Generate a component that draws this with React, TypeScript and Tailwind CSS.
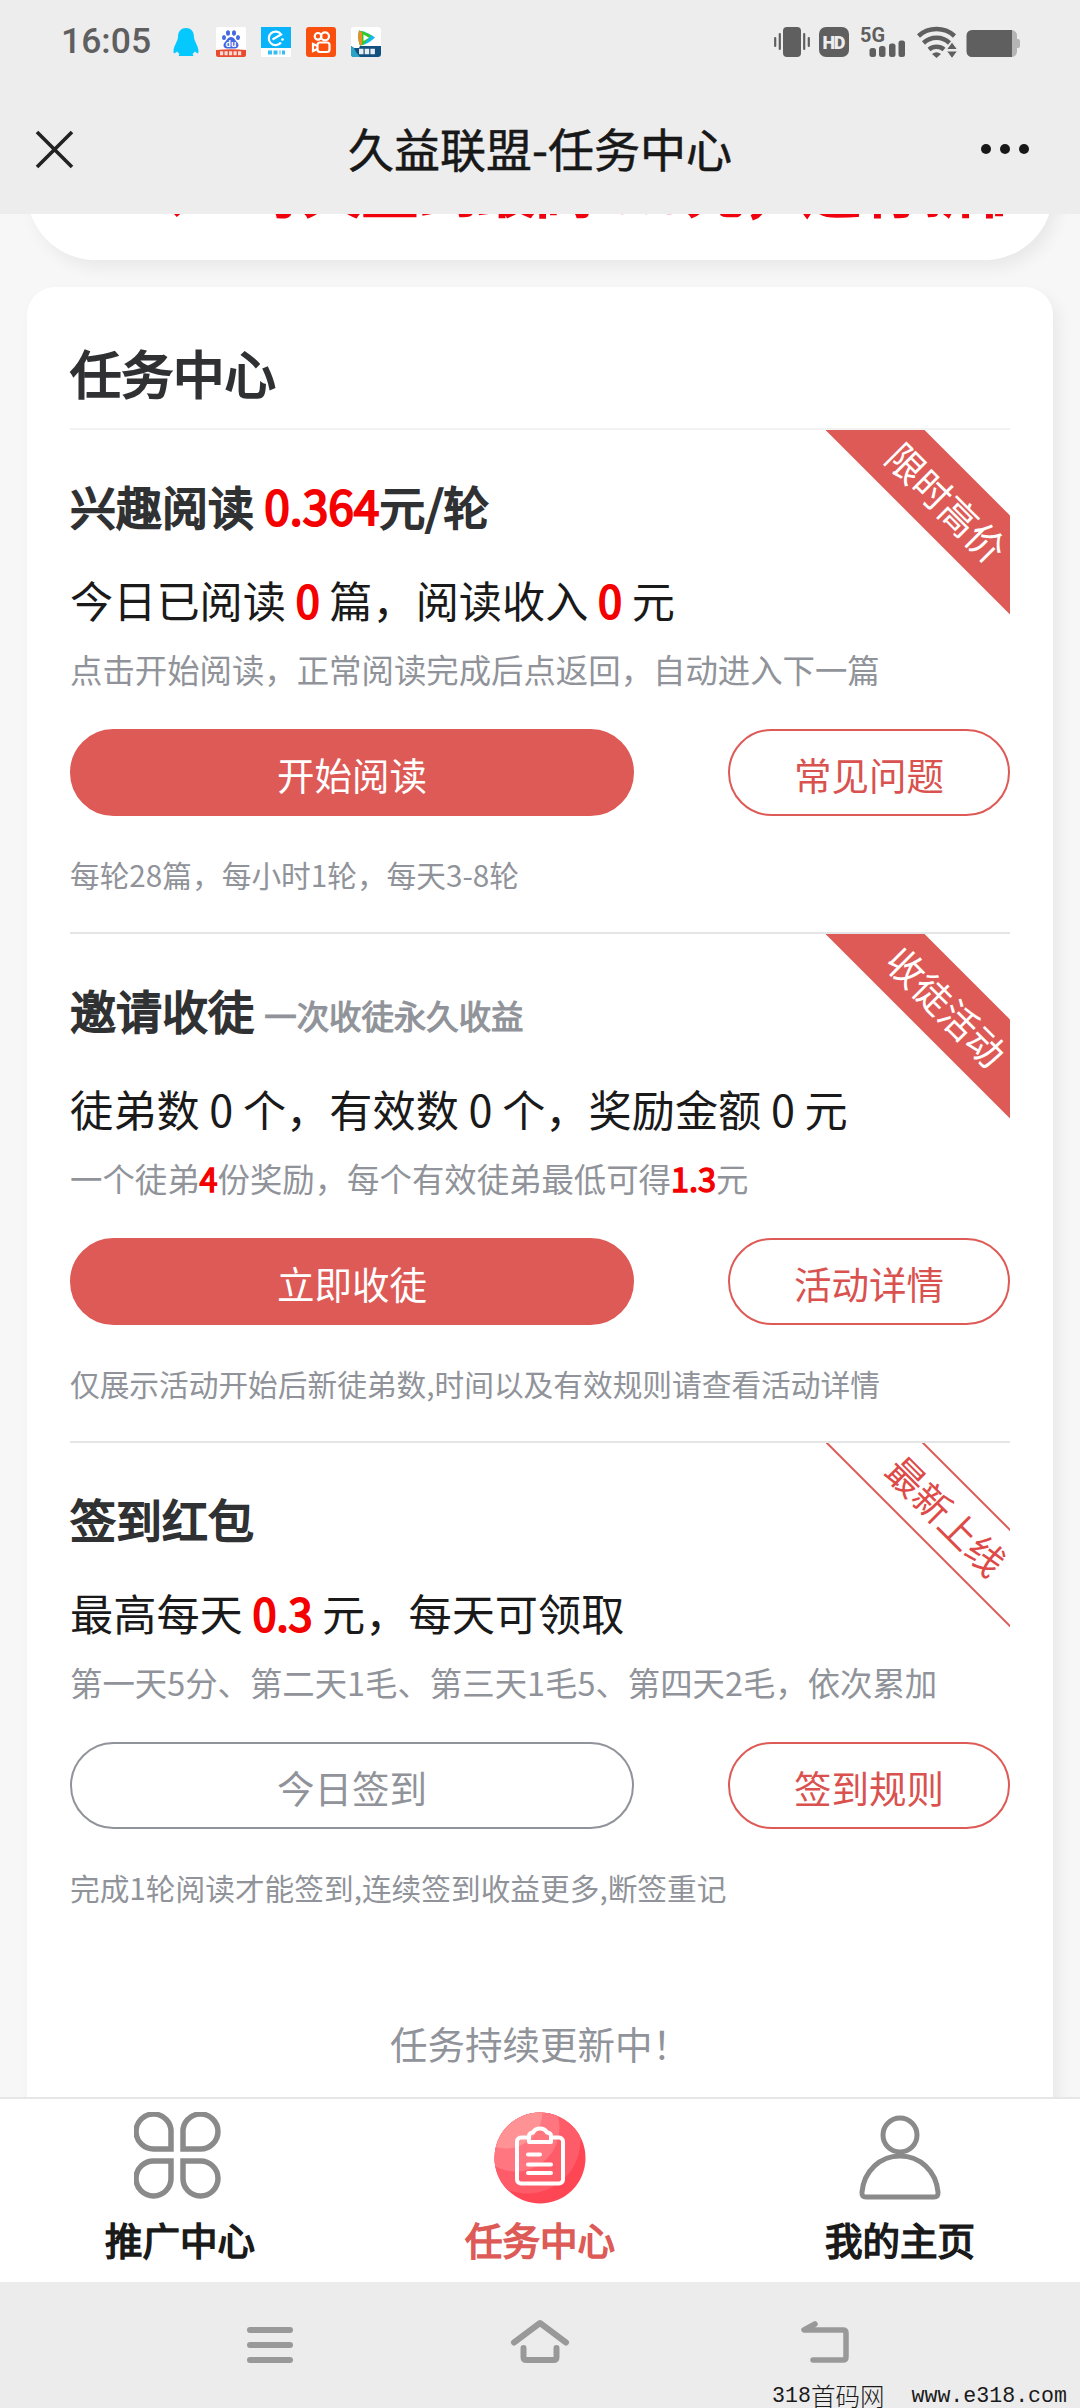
import type { ReactNode } from "react";
import clsx from "clsx";

interface TaskSectionProps {
  title: ReactNode;
  summary: ReactNode;
  hint: ReactNode;
  primary: string;
  secondary: string;
  note: string;
  ribbon: string;
  outlineRibbon?: boolean;
  disabled?: boolean;
  spacious?: boolean;
  last?: boolean;
}

function Red({ children }: { children: ReactNode }) {
  return <span className="text-[#f50000] [-webkit-text-stroke:0.045em]">{children}</span>;
}

function Ribbon({ text, outline }: { text: string; outline?: boolean }) {
  return (
    <div className="absolute right-0 top-0 size-[184px] overflow-hidden">
      <div
        className={clsx(
          "absolute -left-[29px] top-[37px] flex h-[70px] w-[300px] rotate-45 items-center justify-center text-[37.5px] leading-none",
          outline ? "border-2 border-[#dd5a56] bg-white text-[#dd4a48]" : "bg-[#dd5a56] text-white"
        )}
      >
        {text}
      </div>
    </div>
  );
}

function TaskSection(p: TaskSectionProps) {
  return (
    <section className={clsx("relative pt-[43px]", !p.last && "border-b-2 border-[#e4e5e7] pb-[37px]")}>
      <Ribbon text={p.ribbon} outline={p.outlineRibbon} />
      <h2 className="h-[64px] text-[46px] leading-[64px] text-[#303133] [-webkit-text-stroke:0.042em]">{p.title}</h2>
      <p className={clsx("text-[43.2px] leading-[60px] text-[#1a1a1a]", p.spacious ? "mt-[37px]" : "mt-[32px]")}>
        {p.summary}
      </p>
      <p className="mt-[18px] text-[32.4px] leading-[44px] text-[#909399]">{p.hint}</p>
      <div className="mt-[38px] flex justify-between text-[37.5px]">
        <button
          className={clsx(
            "h-[87px] w-[564px] rounded-full border-2 pt-[4px]",
            p.disabled ? "border-[#909399] text-[#909399]" : "border-[#dd5a56] bg-[#dd5a56] text-white"
          )}
        >
          {p.primary}
        </button>
        <button className="h-[87px] w-[282px] rounded-full border-2 border-[#dd5a56] pt-[4px] text-[#d9524f]">
          {p.secondary}
        </button>
      </div>
      <p className="mt-[39px] text-[29.7px] leading-[40px] text-[#909399]">{p.note}</p>
    </section>
  );
}

function StatusBar() {
  return (
    <div className="flex h-[84px] items-center pl-[61px] pr-[60px] text-[#5f5f5f]">
      <span className="w-[112px] font-[Roboto] text-[35.5px] font-medium leading-none">16:05</span>
      <svg width="208" height="30" viewBox="0 0 208 30">
        <path
          d="M13 1C8.500 1 5 4 5 10c0 4-4.500 9-4.500 14 0 3 1 3 3.500.5L6.500 27q-2 2 .5 2h12q2.500 0 .5-2l2.500-2.500c2.500 2.500 3.500 2.500 3.500-.5 0-5-4.500-10-4.500-14 0-6-3.500-9-8-9z"
          fill="#05c8ff"
        />
        <g transform="translate(43)">
          <rect width="30" height="30" rx="2" fill="#fff" />
          <ellipse cx="8" cy="10.500" rx="2" ry="2.600" fill="#4467e4" />
          <ellipse cx="12" cy="6" rx="2" ry="2.800" fill="#4467e4" />
          <ellipse cx="18" cy="6" rx="2" ry="2.800" fill="#4467e4" />
          <ellipse cx="22" cy="10.500" rx="2" ry="2.600" fill="#4467e4" />
          <path d="M15 10c3 0 4 3 6 5 3 3 1 6.500-2 6.500H11C8 21.500 6 18 9 15c2-2 3-5 6-5z" fill="#4467e4" />
          <text x="15" y="20" fontSize="8.500" fontWeight="700" textAnchor="middle" fill="#fff">du</text>
          <path d="M0 23q15-1.500 30 0v5a2 2 0 0 1-2 2H2a2 2 0 0 1-2-2z" fill="#e8492f" />
          <path d="M4 26.300h22" stroke="#fff" strokeWidth="4" strokeDasharray="3.200 1.300" opacity=".8" />
        </g>
        <g transform="translate(88)">
          <rect width="30" height="30" fill="#fff" />
          <rect width="30" height="21" fill="#0ab4fb" />
          <path d="M20 15.500a6.800 6.800 0 1 1 .2-8L11.500 12.500" fill="none" stroke="#fff" strokeWidth="2.200" />
          <circle cx="21.500" cy="12.500" r="1.300" fill="#fff" />
          <path d="M7 25.500h17" stroke="#35bdf4" strokeWidth="4" strokeDasharray="4 1.500 4 2 1 1.500" />
        </g>
        <g transform="translate(133)">
          <rect width="30" height="30" rx="3" fill="#f9500f" />
          <g fill="none" stroke="#fff" strokeWidth="2.200">
            <circle cx="12" cy="9.300" r="3.300" />
            <circle cx="19" cy="9.300" r="4" />
            <rect x="11.500" y="15.500" width="12" height="9.500" rx="2.500" />
            <path d="M11.500 19 7 17v7l4.500-2" />
          </g>
        </g>
        <g transform="translate(178)">
          <rect width="30" height="30" rx="3" fill="#fff" />
          <path d="M8 3.500c6 1 12 4 16 7-4 4-9 7-15 8-2-5-2-10-1-15z" fill="#12b9ee" />
          <path d="M8 3.500c5 1 9 3 12 5l-8 9.500-3 .5c-2-5-2-10-1-15z" fill="#35c924" />
          <path d="M8 3.500c-1 5-1 10 1 15l2-1V5z" fill="#f58a20" />
          <path d="M12.500 7.500 18 10.800 12.500 14z" fill="#fff" />
          <path d="M0 19l3 2h5l1-2h21v8a3 3 0 0 1-3 3H3a3 3 0 0 1-3-3z" fill="#12507f" />
          <path d="M0 19l3 2 2 4 4 5H3a3 3 0 0 1-3-3z" fill="#2ba3c4" />
          <path d="M8 24.500h17" stroke="#fff" strokeWidth="5.500" strokeDasharray="4.500 1.200" opacity=".9" />
        </g>
      </svg>
      <svg className="ml-auto overflow-visible" width="246" height="30" viewBox="774 27 246 30" fill="#5f5f5f">
        <rect x="783" y="27" width="18" height="30" rx="4" />
        <path d="M775.200 38v8M779.800 34v15M804.200 34v15M808.800 38v8" stroke="#5f5f5f" strokeWidth="2.200" strokeLinecap="round" />
        <rect x="819" y="27" width="30" height="30" rx="7" />
        <text x="834" y="49" fontSize="18" fontWeight="900" textAnchor="middle" fill="#ededed" fontFamily="Roboto" textLength="23">HD</text>
        <text x="860" y="42" fontSize="20" fontWeight="700" fontFamily="Roboto" textLength="25" lengthAdjust="spacingAndGlyphs">5G</text>
        <rect x="869.500" y="48" width="6.500" height="9" rx="2.500" />
        <rect x="879" y="46" width="6.500" height="11" rx="2.500" />
        <rect x="889" y="43.500" width="6.500" height="13.500" rx="2.500" />
        <rect x="898.500" y="40.500" width="6.500" height="16.500" rx="2.500" />
        <g fill="none" stroke="#5f5f5f" strokeWidth="4.500">
          <path d="M918.500 36a27 27 0 0 1 36 0" />
          <path d="M923.500 43a19 19 0 0 1 26 0" />
          <path d="M929 49.500a11.500 11.500 0 0 1 15 0" />
        </g>
        <path d="M932 54q4.500-3.500 9 0l-4.500 4z" />
        <path d="M952 42l5.500 7.500h-11zM952 58.500l-5.500-7.500h11z" stroke="#ededed" strokeWidth="1" />
        <path d="M1008 30h4a6 6 0 0 1 5 6v3h1q2 0 2 2v5q0 2-2 2h-1v4a6 6 0 0 1-5 5h-4z" fill="#b5b5b5" />
        <path d="M972 30h40v27h-40a5.500 5.500 0 0 1-5.500-5.500v-16A5.500 5.500 0 0 1 972 30z" />
      </svg>
    </div>
  );
}

function TitleBar() {
  return (
    <div className="relative flex h-[130px] items-center justify-center">
      <svg className="absolute left-[35px] top-[46px]" width="39" height="39" viewBox="0 0 39 39" stroke="#222" strokeWidth="3.600">
        <path d="M2 2l35 35M37 2 2 37" />
      </svg>
      <h1 className="pb-[5px] text-[46px] leading-none text-[#181818] [-webkit-text-stroke:0.012em]">久益联盟-任务中心</h1>
      <div className="absolute right-[51px] top-[60px] flex gap-[9px]">
        <i className="size-[10px] rounded-full bg-[#181818]" />
        <i className="size-[10px] rounded-full bg-[#181818]" />
        <i className="size-[10px] rounded-full bg-[#181818]" />
      </div>
    </div>
  );
}

function CloverIcon() {
  return (
    <svg width="92" height="92" viewBox="0 0 92 92" fill="none" stroke="#8a8a8a" strokeWidth="5.500">
      <path d="M37 37H20.500A17.500 17.500 0 1 1 37 20.500z" />
      <path d="M49 37H66A17.500 17.500 0 1 0 49 20.500z" />
      <path d="M37 49H20.500A17.500 17.500 0 1 0 37 66z" />
      <path d="M49 49H66A17.500 17.500 0 1 1 49 66z" />
    </svg>
  );
}

function ClipboardIcon() {
  return (
    <svg width="92" height="92" viewBox="0 0 92 92">
      <defs>
        <clipPath id="disc">
          <circle cx="46" cy="46" r="45.500" />
        </clipPath>
      </defs>
      <g clipPath="url(#disc)">
        <rect width="92" height="92" fill="#ff4655" />
        <circle cx="33" cy="28" r="53.500" fill="#ff5c69" />
        <circle cx="22" cy="16" r="43.500" fill="#ff7680" />
        <circle cx="12" cy="0" r="36.500" fill="#ff9294" />
      </g>
      <g fill="none" stroke="#fff" strokeWidth="4" strokeLinejoin="round" strokeLinecap="round">
        <path d="M35 25.500h-8a4 4 0 0 0-4 4v38a4 4 0 0 0 4 4h38a4 4 0 0 0 4-4v-38a4 4 0 0 0-4-4h-7" />
        <path d="M35 24q0-3 4-3.500 2-4 7-4t7 4q4 .5 4 3.500v6H35z" />
        <path d="M34 42.500h12M34 52.500h23M34 61h23" />
      </g>
    </svg>
  );
}

function PersonIcon() {
  return (
    <svg width="92" height="92" viewBox="0 0 92 92" fill="none" stroke="#8a8a8a" strokeWidth="5">
      <circle cx="46" cy="23" r="17" />
      <path d="M46 44c20 0 36 15 38 36 .3 3.500-1 5-4 5H12c-3 0-4.300-1.500-4-5C10 59 26 44 46 44z" />
    </svg>
  );
}

const tabs = [
  { label: "推广中心", icon: <CloverIcon />, active: false },
  { label: "任务中心", icon: <ClipboardIcon />, active: true },
  { label: "我的主页", icon: <PersonIcon />, active: false },
];

export default function App() {
  return (
    <div className="flex h-[2408px] w-[1080px] flex-col overflow-hidden bg-[#f7f7f7] font-['Noto_Sans_CJK_SC',sans-serif]">
      <header className="h-[214px] shrink-0 bg-[#ededed]">
        <StatusBar />
        <TitleBar />
      </header>

      <main className="h-[1883px] shrink-0 overflow-hidden px-[27px]">
        {/* notice banner, mostly scrolled out of view */}
        <div className="-mt-[154px] h-[200px] rounded-[68px] bg-white pl-[134px] pr-[50px] pt-[92px] shadow-[6px_8px_16px_rgba(0,0,0,0.06)]">
          <p className="flex overflow-hidden whitespace-nowrap text-[58px] leading-[70px] text-[#f0000c] [-webkit-text-stroke:0.045em]">
            <span className="w-[84px] shrink-0">、</span>
            <span>每天签到最高 0.3元，还有新任</span>
          </p>
        </div>

        <div className="mt-[27px] h-[2000px] rounded-[28px] bg-white px-[43px] pt-[54px] shadow-[6px_8px_16px_rgba(0,0,0,0.06)]">
          <h1 className="h-[89px] border-b-2 border-[#f2f2f2] text-[51.5px] leading-[61px] text-[#303133] [-webkit-text-stroke:0.042em]">
            任务中心
          </h1>
          <TaskSection
            title={<>兴趣阅读 <Red>0.364</Red>元/轮</>}
            summary={<>今日已阅读 <Red>0</Red> 篇，阅读收入 <Red>0</Red> 元</>}
            hint="点击开始阅读，正常阅读完成后点返回，自动进入下一篇"
            primary="开始阅读"
            secondary="常见问题"
            note="每轮28篇，每小时1轮，每天3-8轮"
            ribbon="限时高价"
          />
          <TaskSection
            title={
              <>
                邀请收徒{" "}
                <span className="text-[32.4px] leading-none text-[#909399] [-webkit-text-stroke:0.035em]">一次收徒永久收益</span>
              </>
            }
            summary="徒弟数 0 个，有效数 0 个，奖励金额 0 元"
            hint={<>一个徒弟<Red>4</Red>份奖励，每个有效徒弟最低可得<Red>1.3</Red>元</>}
            primary="立即收徒"
            secondary="活动详情"
            note="仅展示活动开始后新徒弟数,时间以及有效规则请查看活动详情"
            ribbon="收徒活动"
            spacious
          />
          <TaskSection
            title="签到红包"
            summary={<>最高每天 <Red>0.3</Red> 元，每天可领取</>}
            hint="第一天5分、第二天1毛、第三天1毛5、第四天2毛，依次累加"
            primary="今日签到"
            secondary="签到规则"
            note="完成1轮阅读才能签到,连续签到收益更多,断签重记"
            ribbon="最新上线"
            outlineRibbon
            disabled
            last
          />
          <p className="mt-[110px] text-center text-[37.5px] leading-[50px] text-[#909399]">任务持续更新中！</p>
        </div>
      </main>

      <nav className="flex h-[185px] shrink-0 border-t-2 border-[#e6e6e6] bg-white">
        {tabs.map((t) => (
          <div key={t.label} className="flex flex-1 flex-col items-center pt-[13px]">
            {t.icon}
            <span
              className={clsx(
                "mt-[10px] text-[37.5px] leading-[50px] [-webkit-text-stroke:0.042em]",
                t.active ? "text-[#dd5a56]" : "text-[#1a1a1a]"
              )}
            >
              {t.label}
            </span>
          </div>
        ))}
      </nav>

      <footer className="relative flex h-[126px] shrink-0 justify-center bg-[#ececec] pt-[35px]">
        <svg className="overflow-visible" width="606" height="50" viewBox="0 0 606 50" fill="none" stroke="#999" strokeWidth="6" strokeLinecap="round" strokeLinejoin="round">
          <path d="M13 13h40M13 28h40M13 43h40" />
          <path d="M277 25.500 303 6l26 19.500M286.500 31v9q0 3 3 3h27q3 0 3-3v-9" />
          <path d="M578 7l-11 6h39q3 0 3 3v24q0 3-3 3h-30" className="[stroke-width:5.500]" />
        </svg>
        <p className="absolute bottom-0 right-[13px] flex items-center font-['Liberation_Mono',monospace] text-[21.600px] leading-[24px] text-[#1a1a1a]">
          318<span className="font-['Noto_Sans_CJK_SC',sans-serif] text-[24.500px] font-light">首码网</span>
          <span className="ml-[27px]">www.e318.com</span>
        </p>
      </footer>
    </div>
  );
}
